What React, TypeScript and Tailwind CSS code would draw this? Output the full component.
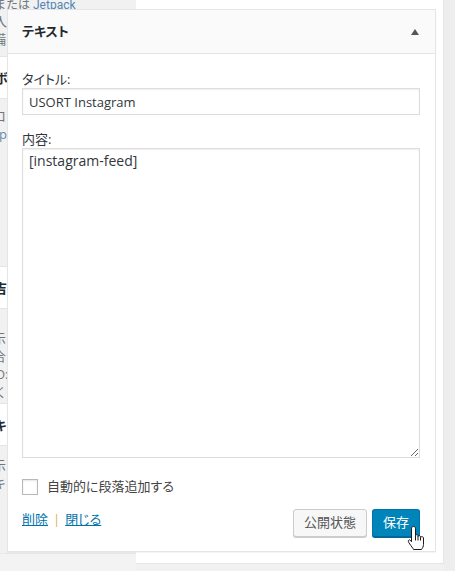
import React from "react";

const font = "font-['Open_Sans','Noto_Sans_CJK_JP',sans-serif]";

const Sliver = ({ ch, offset, bold, color }: { ch: string; offset: string; bold?: boolean; color?: string }) => (
  <div className={`whitespace-nowrap leading-[18px] ${offset} ${bold ? "font-bold text-[#23282d]" : color || "text-[#72777c]"}`}>
    {ch}
  </div>
);

const LeftColumn = () => (
  <div className="w-[136px] shrink-0 flex flex-col text-[13px]">
    <div className="h-[58px] bg-[#f1f1f1] -mt-[2px]">
      <div className="whitespace-nowrap leading-[14px] -ml-[6px] text-[12px] text-[#72777c] font-['Roboto','Noto_Sans_CJK_JP',sans-serif]">
        または <span className="text-[#4f86b5]">Jetpack</span>
      </div>
      <Sliver ch="人" offset="-ml-[6px]" />
      <Sliver ch="備" offset="-ml-[7px]" />
    </div>
    <div className="h-[43px] bg-white border-y border-[#e5e5e5] flex items-center">
      <Sliver ch="ボ" offset="-ml-[5px]" bold />
    </div>
    <div className="h-[167px] bg-[#f1f1f1] pt-[8px]">
      <Sliver ch="ロ" offset="-ml-[7px]" />
      <Sliver ch="p" offset="-ml-[1px]" color="text-[#6b8aa8]" />
    </div>
    <div className="h-[43px] bg-white border-y border-[#e5e5e5] flex items-center">
      <Sliver ch="吉" offset="-ml-[6px]" bold />
    </div>
    <div className="h-[94px] bg-[#f1f1f1] pt-[20px]">
      <Sliver ch="示" offset="-ml-[7px]" />
      <Sliver ch="合" offset="-ml-[7px]" />
      <Sliver ch="O:" offset="-ml-[5px]" />
      <Sliver ch="く" offset="-ml-[6px]" />
    </div>
    <div className="h-[43px] bg-white border-y border-[#e5e5e5] flex items-center">
      <Sliver ch="キ" offset="-ml-[6px]" bold />
    </div>
    <div className="h-[107px] bg-[#f1f1f1] pt-[10px]">
      <Sliver ch="示" offset="-ml-[7px]" />
      <Sliver ch="キ" offset="-ml-[7px]" />
    </div>
    <div className="flex-1 bg-[#f3f3f3] border-t border-[#e8e8e8]" />
  </div>
);

const HandCursor = () => (
  <svg width="19" height="27" viewBox="0 0 19 27" className="absolute left-[407px] top-[525px]">
    <path
      d="M6.5 1.5 C7.6 1.5 8.5 2.2 8.5 3.2 L8.5 10.6 C8.5 9.4 11 9.4 11 10.6 L11 11.6 C11 10.4 13.5 10.4 13.5 11.6 L13.5 12.6 C13.5 11.4 16.5 11.4 16.5 12.8 L16.5 19.5 C16.5 21.5 15.5 23 14.5 24.5 L6.5 24.5 L6 23.5 C4.5 21.5 2.8 19.3 1.6 17.2 C0.9 15.8 1.6 14.6 2.7 14.9 C3.6 15.1 4 15.9 4.5 16.8 L4.5 3.2 C4.5 2.2 5.4 1.5 6.5 1.5 Z"
      fill="#fff"
      stroke="#1a1a1a"
      strokeWidth="1"
      strokeLinejoin="round"
    />
    <path d="M8.5 10.6 L8.5 15.5 M11 11.6 L11 15.5 M13.5 12.6 L13.5 15.5" stroke="#1a1a1a" strokeWidth="1" fill="none" />
  </svg>
);

const Panel = () => (
  <div className="absolute left-[7px] top-[9px] w-[429px] bg-white border border-[#e5e5e5] shadow-[0_1px_1px_rgba(0,0,0,0.04)] [font-feature-settings:'palt']">
    <div className="h-[44px] bg-[#fafafa] border-b border-[#e5e5e5] flex items-center justify-between pl-[14px] pr-[16px]">
      <span className="text-[13px] font-bold text-[#23282d]">テキスト</span>
      <svg width="8" height="6" viewBox="0 0 8 6">
        <path d="M4 0 L8 6 L0 6 Z" fill="#50575e" />
      </svg>
    </div>
    <div className="pl-[14px] pr-[15px] pt-[17px] pb-[14px] text-[13px] text-[#32373c]">
      <label className="block leading-[17px]">タイトル:</label>
      <input
        readOnly
        defaultValue="USORT Instagram"
        className="block w-full h-[27px] border border-[#ddd] shadow-[inset_0_1px_2px_rgba(0,0,0,0.07)] px-[6px] text-[13px] text-[#32373c] outline-none"
      />
      <label className="block leading-[17px] mt-[16px]">内容:</label>
      <textarea
        readOnly
        defaultValue="[instagram-feed]"
        className="block w-full h-[310px] border border-[#ddd] shadow-[inset_0_1px_2px_rgba(0,0,0,0.07)] px-[6px] pt-[2px] text-[14px] leading-[20px] text-[#32373c] outline-none resize-y"
      />
      <div className="mt-[21px] flex items-center h-[16px]">
        <span className="w-[16px] h-[16px] border border-[#b4b9be] shadow-[inset_0_1px_2px_rgba(0,0,0,0.1)] bg-white" />
        <span className="ml-[9px] text-[#444]">自動的に段落追加する</span>
      </div>
      <div className="mt-[14px] flex justify-between h-[28px]">
        <div className="flex items-start pt-[2px] leading-[17px]">
          <a className="text-[#0073aa] underline">削除</a>
          <span className="mx-[5px] text-[#e3a95c]">|</span>
          <a className="text-[#0073aa] underline">閉じる</a>
        </div>
        <div className="flex gap-[5px]">
          <button className="h-[28px] px-[10px] rounded-[3px] bg-[#f7f7f7] border border-[#ccc] shadow-[0_1px_0_#ccc] text-[13px] text-[#555]">
            公開状態
          </button>
          <button className="h-[28px] px-[10px] rounded-[3px] bg-[#0085ba] border border-[#0073aa] border-b-[#006799] shadow-[0_1px_0_#006799] text-[13px] text-white">
            保存
          </button>
        </div>
      </div>
    </div>
  </div>
);

export default function App() {
  return (
    <div className={`relative w-[455px] h-[571px] overflow-hidden bg-[#f1f1f1] flex ${font}`}>
      <LeftColumn />
      <div className="w-[308px] h-[564px] shrink-0 bg-white border-r border-b border-[#e5e5e5]" />
      <div className="flex-1 bg-[#eeeeee]" />
      <Panel />
      <HandCursor />
    </div>
  );
}
